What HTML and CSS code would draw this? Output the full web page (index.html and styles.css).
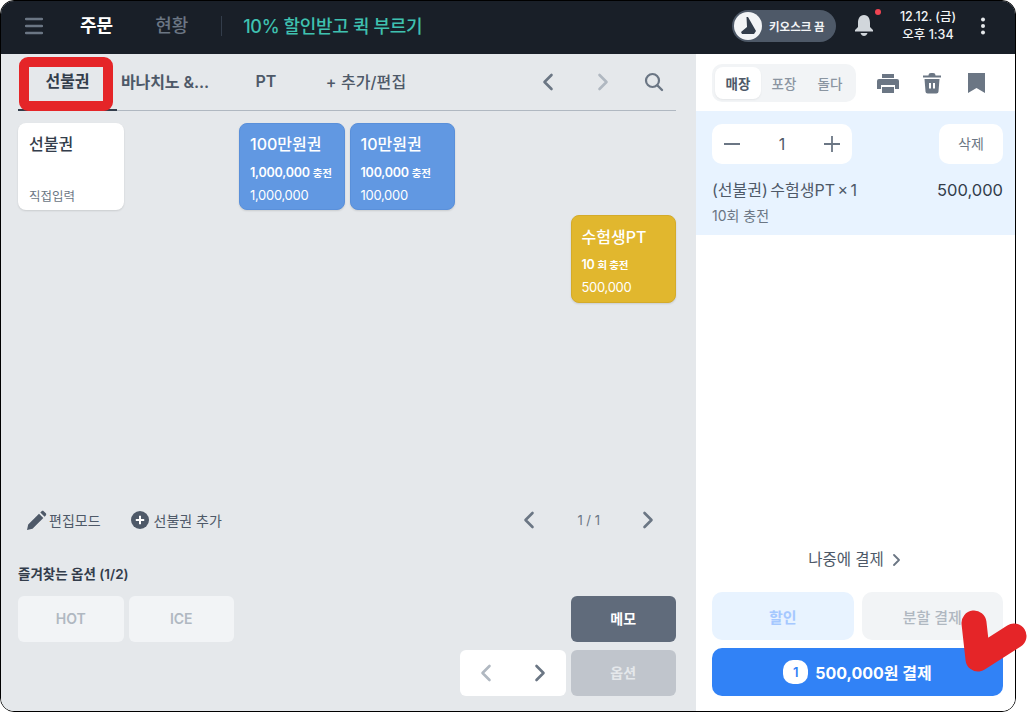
FILE: index.html
```html
<!DOCTYPE html>
<html lang="ko">
<head>
    <meta charset="UTF-8">
    <title>주문</title>
    <link rel="stylesheet" href="styles.css">
</head>
<body>
<div class="page">
<div class="app">
    <header class="topbar">
        <svg class="menu-icon" width="18" height="18" viewBox="0 0 18 18"><path d="M1 2h16M1 9h16M1 16h16" stroke="#6b7684" stroke-width="2.4" stroke-linecap="round"/></svg>
        <span class="nav-link active">주문</span>
        <span class="nav-link">현황</span>
        <span class="divider"></span>
        <span class="promo">10% 할인받고 퀵 부르기</span>
        <div class="topbar-right">
            <div class="kiosk">
                <span class="kiosk-knob">
                    <svg width="20" height="20" viewBox="0 0 20 20"><path d="M8.500 1L10 1L18 15L16 18H4L3 16L9 11Z" fill="#333d4b"/></svg>
                </span>
                <span class="kiosk-label">키오스크 끔</span>
            </div>
            <div class="bell">
                <svg width="20" height="23" viewBox="0 0 20 23"><path d="M10 1C5.500 1 4 5 4 9V13L1 16V17.500H19V16L16 13V9C16 5 14.500 1 10 1Z" fill="#d1d6db"/><path d="M6.500 19H13.500C13 21 11.500 22 10 22S7 21 6.500 19Z" fill="#d1d6db"/></svg>
                <span class="bell-dot"></span>
            </div>
            <div class="clock">12.12. (금)<br>오후 1:34</div>
            <svg class="kebab" width="6" height="18" viewBox="0 0 6 18"><circle cx="3" cy="2.500" r="2" fill="#e5e8eb"/><circle cx="3" cy="9" r="2" fill="#e5e8eb"/><circle cx="3" cy="15.500" r="2" fill="#e5e8eb"/></svg>
        </div>
    </header>

    <div class="body">
        <main class="left">
            <nav class="tabs">
                <span class="tab tab-on">선불권</span>
                <span class="tab">바나치노 &amp;...</span>
                <span class="tab">PT</span>
                <span class="tab tab-add">+ 추가/편집</span>
                <div class="tab-tools">
                    <svg width="14" height="18" viewBox="0 0 14 18"><path d="M10.500 2L3.500 9l7 7" fill="none" stroke="#6b7684" stroke-width="2.600" stroke-linecap="round" stroke-linejoin="round"/></svg>
                    <svg width="14" height="18" viewBox="0 0 14 18"><path d="M3.500 2l7 7-7 7" fill="none" stroke="#b0b8c1" stroke-width="2.600" stroke-linecap="round" stroke-linejoin="round"/></svg>
                    <svg width="20" height="20" viewBox="0 0 20 20"><circle cx="8.500" cy="8.500" r="6.500" fill="none" stroke="#6b7684" stroke-width="2.200"/><path d="M13.500 13.500L18 18" stroke="#6b7684" stroke-width="2.400" stroke-linecap="round"/></svg>
                </div>
            </nav>

            <section class="cards">
                <div class="card card-white">
                    <div class="card-title">선불권</div>
                    <div class="card-bottom">직접입력</div>
                </div>
                <div class="card card-blue col-3">
                    <div class="card-title">100만원권</div>
                    <div class="card-charge">1,000,000 <small>충전</small></div>
                    <div class="card-bottom">1,000,000</div>
                </div>
                <div class="card card-blue col-4">
                    <div class="card-title">10만원권</div>
                    <div class="card-charge">100,000 <small>충전</small></div>
                    <div class="card-bottom">100,000</div>
                </div>
                <div class="card card-yellow col-6 row-2">
                    <div class="card-title">수험생PT</div>
                    <div class="card-charge">10 <small>회 충전</small></div>
                    <div class="card-bottom">500,000</div>
                </div>
            </section>

            <div class="edit-row">
                <span class="edit-btn">
                    <svg width="21" height="21" viewBox="0 0 21 21"><path d="M1 20l1.200-5.500L13 3.700l4.300 4.300L6.500 18.800zM14.300 2.400l1.300-1.200c.6-.6 1.500-.6 2.100 0l2.100 2.100c.6.6.6 1.500 0 2.100l-1.200 1.300z" fill="#4e5968"/></svg>
                    편집모드
                </span>
                <span class="edit-btn add-btn">
                    <svg width="18" height="18" viewBox="0 0 18 18"><circle cx="9" cy="9" r="9" fill="#4e5968"/><path d="M9 4.800v8.400M4.800 9h8.400" stroke="#fff" stroke-width="2"/></svg>
                    선불권 추가
                </span>
                <div class="pager">
                    <svg width="14" height="18" viewBox="0 0 14 18"><path d="M10.500 2L3.500 9l7 7" fill="none" stroke="#6b7684" stroke-width="2.600" stroke-linecap="round" stroke-linejoin="round"/></svg>
                    <span class="pager-num">1 / 1</span>
                    <svg width="14" height="18" viewBox="0 0 14 18"><path d="M3.500 2l7 7-7 7" fill="none" stroke="#6b7684" stroke-width="2.600" stroke-linecap="round" stroke-linejoin="round"/></svg>
                </div>
            </div>

            <div class="fav-title">즐겨찾는 옵션 (1/2)</div>
            <div class="options">
                <span class="opt">HOT</span>
                <span class="opt">ICE</span>
                <span class="opt opt-memo col-6">메모</span>
                <div class="opt-nav col-5 row-2">
                    <svg width="14" height="18" viewBox="0 0 14 18"><path d="M10.500 2L3.500 9l7 7" fill="none" stroke="#b0b8c1" stroke-width="2.600" stroke-linecap="round" stroke-linejoin="round"/></svg>
                    <svg width="14" height="18" viewBox="0 0 14 18"><path d="M3.500 2l7 7-7 7" fill="none" stroke="#6b7684" stroke-width="2.600" stroke-linecap="round" stroke-linejoin="round"/></svg>
                </div>
                <span class="opt opt-off col-6 row-2">옵션</span>
            </div>
        </main>

        <aside class="right">
            <div class="order-tools">
                <div class="segment">
                    <span class="seg seg-on">매장</span>
                    <span class="seg">포장</span>
                    <span class="seg">돌다</span>
                </div>
                <div class="tool-icons">
                    <svg width="22" height="21" viewBox="0 0 22 21"><path d="M5 1h12v4H5zM2 6h18a2 2 0 0 1 2 2v8h-4v-4H4v4H0V8a2 2 0 0 1 2-2zM5 14h12v6H5z" fill="#6b7684"/></svg>
                    <svg width="20" height="22" viewBox="0 0 20 22"><path d="M6.500 3.500C6.500 1.800 7.500 1 9 1h2c1.500 0 2.500.8 2.500 2.500H19v2H1v-2zM2.500 7h15l-1 12.500c-.1 1.300-1 2-2.200 2H5.700c-1.200 0-2.100-.7-2.200-2z" fill="#6b7684"/><path d="M8 11v5.500M12 11v5.500" stroke="#fff" stroke-width="2"/></svg>
                    <svg class="bookmark" width="17" height="20" viewBox="0 0 17 20"><path d="M0 0h17v20l-8.500-5-8.500 5z" fill="#6b7684"/></svg>
                </div>
            </div>

            <div class="order-item">
                <div class="item-controls">
                    <div class="stepper">
                        <svg width="16" height="16" viewBox="0 0 16 16"><path d="M0 8h16" stroke="#6b7684" stroke-width="1.800"/></svg>
                        <span class="qty">1</span>
                        <svg width="16" height="16" viewBox="0 0 16 16"><path d="M0 8h16M8 0v16" stroke="#6b7684" stroke-width="1.800"/></svg>
                    </div>
                    <span class="del-btn">삭제</span>
                </div>
                <div class="item-line">
                    <span>(선불권) 수험생PT × 1</span>
                    <span class="item-price">500,000</span>
                </div>
                <div class="item-sub">10회 충전</div>
            </div>

            <div class="pay-area">
                <div class="later">
                    나중에 결제
                    <svg width="9" height="12" viewBox="0 0 9 12"><path d="M2 1l5 5-5 5" fill="none" stroke="#6b7684" stroke-width="1.800" stroke-linecap="round" stroke-linejoin="round"/></svg>
                </div>
                <div class="pay-row">
                    <span class="btn btn-discount">할인</span>
                    <span class="btn btn-split">분할 결제</span>
                </div>
                <div class="btn btn-pay"><span class="pay-count">1</span>500,000원 결제</div>
            </div>
        </aside>
    </div>
</div>

<!-- annotation marks drawn over the screenshot -->
<div class="mark-box"></div>
<svg class="mark-check" width="78" height="80" viewBox="0 0 78 80"><path d="M24 23L28 59L64 36" fill="none" stroke="#e52528" stroke-width="25" stroke-linecap="round" stroke-linejoin="round"/></svg>
</div>
</body>
</html>
```

FILE: styles.css
```css
* {
    box-sizing: border-box;
}
html, body {
    margin: 0;
    height: 100%;
    background: #fff;
}
body {
    font-family: Inter, "Noto Sans CJK KR", sans-serif;
    color: #333d4b;
}
.page {
    position: relative;
    width: 1028px;
    height: 712px;
    overflow: hidden;
}
.app {
    width: 1016px;
    height: 712px;
    border: 1px solid #000;
    border-radius: 14px;
    overflow: hidden;
    display: flex;
    flex-direction: column;
}
.col-3 { grid-column: 3; }
.col-4 { grid-column: 4; }
.col-5 { grid-column: 5; }
.col-6 { grid-column: 6; }
.row-2 { grid-row: 2; }

/* top bar */
.topbar {
    height: 53px;
    flex: none;
    background: #191f28;
    display: flex;
    align-items: center;
    padding: 0 0 4px 24px;
}
.menu-icon {
    margin-right: 37px;
}
.nav-link {
    font-size: 18px;
    font-weight: 500;
    color: #6b7684;
    margin-right: 42px;
    line-height: 1;
}
.nav-link.active {
    color: #fff;
    font-weight: 700;
}
.divider {
    width: 1px;
    height: 20px;
    background: #333d4b;
    margin-left: -9px;
    margin-right: 21px;
}
.promo {
    font-size: 18px;
    font-weight: 500;
    color: #3fc1b0;
    letter-spacing: -0.35px;
    padding-bottom: 1px;
}
.topbar-right {
    margin-left: auto;
    display: flex;
    align-items: center;
}
.kiosk {
    width: 104px;
    height: 32px;
    border-radius: 16px;
    background: #4e5968;
    display: flex;
    align-items: center;
    padding-left: 2px;
    margin-right: 18px;
}
.kiosk-knob {
    width: 28px;
    height: 28px;
    border-radius: 50%;
    background: #f2f4f6;
    display: flex;
    align-items: center;
    justify-content: center;
}
.kiosk-label {
    font-size: 11.5px;
    font-weight: 700;
    color: #f2f4f6;
    margin-left: 7px;
    white-space: nowrap;
}
.bell {
    position: relative;
    width: 20px;
    height: 23px;
    margin-right: 25px;
}
.bell-dot {
    position: absolute;
    top: -5px;
    right: -7px;
    width: 6px;
    height: 6px;
    border-radius: 50%;
    background: #f04452;
}
.clock {
    font-size: 12.5px;
    font-weight: 500;
    line-height: 18px;
    text-align: center;
    color: #f2f4f6;
    width: 58px;
    margin-right: 23px;
}
.kebab {
    margin-right: 29px;
}

.body {
    flex: 1;
    display: flex;
    min-height: 0;
}

/* left panel */
.left {
    width: 695px;
    background: #e5e8eb;
    padding: 0 20px 15px 17px;
    display: flex;
    flex-direction: column;
}
.tabs {
    height: 57px;
    flex: none;
    display: flex;
    align-items: center;
    border-bottom: 1px solid #b0b8c1;
    position: relative;
}
.tab {
    font-size: 16px;
    font-weight: 600;
    color: #4e5968;
    width: 99px;
    height: 100%;
    display: flex;
    align-items: center;
    justify-content: center;
    white-space: nowrap;
    padding-bottom: 3px;
}
.tab-on {
    color: #333d4b;
    border-bottom: 2px solid #333d4b;
    margin-bottom: -1px;
}
.tab:nth-child(2) {
    width: 92px;
    justify-content: flex-start;
    padding-left: 4px;
    letter-spacing: -0.1px;
}
.tab:nth-child(3) {
    width: 114px;
}
.tab-add {
    width: 82px;
    margin-left: 2px;
    font-weight: 500;
    letter-spacing: 0.1px;
}
.tab-tools {
    margin-left: auto;
    display: flex;
    align-items: center;
    gap: 41px;
    padding-right: 12px;
}
.tab-tools svg:last-child {
    margin-left: -7px;
}
.cards {
    display: grid;
    grid-template-columns: repeat(6, 1fr);
    grid-template-rows: 87px 88px;
    gap: 5px;
    margin-top: 12px;
}
.card {
    border-radius: 8px;
    padding: 10px 11px 4px;
    display: flex;
    flex-direction: column;
    color: #fff;
    box-shadow: 0 1px 2px rgba(0, 0, 0, 0.12);
}
.card-white {
    background: #fff;
    color: #333d4b;
}
.card-blue {
    background: #6198e2;
    border: 1px solid #5a90da;
    padding: 9px 10px 5px;
}
.card-yellow {
    background: #e1b72e;
    border: 1px solid #d4ab2a;
    padding: 10px 10px 6px;
}
.card-title {
    font-size: 16px;
    font-weight: 500;
    line-height: 22px;
    white-space: nowrap;
}
.card-charge {
    font-size: 12.5px;
    font-weight: 600;
    line-height: 16px;
    margin-top: 10px;
    letter-spacing: -0.2px;
    white-space: nowrap;
}
.card-yellow .card-charge {
    margin-top: 9px;
}
.card-charge small {
    font-size: 10.5px;
    font-weight: 700;
}
.card-bottom {
    font-size: 13px;
    line-height: 18px;
    margin-top: auto;
    letter-spacing: -0.3px;
}
.card-white .card-bottom {
    color: #6b7684;
    font-size: 12.5px;
    letter-spacing: 0;
}
.edit-row {
    display: flex;
    align-items: center;
    margin-top: auto;
    padding-left: 8px;
    height: 24px;
}
.edit-btn {
    display: flex;
    align-items: center;
    gap: 2px;
    font-size: 14px;
    color: #4e5968;
    white-space: nowrap;
}
.add-btn {
    margin-left: 30px;
    gap: 5px;
}
.pager {
    margin-left: auto;
    display: flex;
    align-items: center;
    gap: 41px;
    padding-right: 21px;
}
.pager-num {
    font-size: 13px;
    color: #6b7684;
}
.fav-title {
    font-size: 13.5px;
    font-weight: 600;
    color: #333d4b;
    line-height: 18px;
    margin-top: 33px;
}
.options {
    display: grid;
    grid-template-columns: repeat(6, 1fr);
    grid-auto-rows: 46px;
    column-gap: 5px;
    row-gap: 8px;
    margin-top: 13px;
}
.opt {
    border-radius: 6px;
    background: #f2f4f6;
    color: #b0b8c1;
    font-size: 14px;
    font-weight: 600;
    display: flex;
    align-items: center;
    justify-content: center;
    padding-bottom: 2px;
}
.opt-memo {
    background: #606b7b;
    color: #fff;
}
.opt-off {
    background: #c0c5cc;
    color: #e5e8eb;
}
.opt-nav {
    background: #fff;
    border-radius: 6px;
    display: flex;
    align-items: center;
    justify-content: space-between;
    padding: 0 19px;
}

/* right panel */
.right {
    flex: 1;
    background: #fff;
    display: flex;
    flex-direction: column;
}
.order-tools {
    height: 57px;
    flex: none;
    display: flex;
    align-items: center;
    padding: 1px 0 0 16px;
}
.segment {
    width: 144px;
    height: 38px;
    background: #f2f4f6;
    border-radius: 10px;
    padding: 3px;
    display: flex;
}
.seg {
    flex: 1;
    font-size: 13.5px;
    font-weight: 500;
    color: #8b95a1;
    display: flex;
    align-items: center;
    justify-content: center;
}
.seg-on {
    background: #fff;
    border-radius: 8px;
    color: #4e5968;
    font-weight: 600;
    box-shadow: 0 1px 2px rgba(0, 0, 0, 0.06);
}
.tool-icons {
    display: flex;
    align-items: center;
    gap: 23px;
    margin-left: 21px;
}
.bookmark {
    margin-left: 2.5px;
}
.order-item {
    height: 124px;
    flex: none;
    background: #e8f3ff;
    padding: 13px 12px 0 16px;
}
.item-controls {
    display: flex;
    justify-content: space-between;
}
.stepper {
    width: 140px;
    height: 40px;
    background: #fff;
    border-radius: 10px;
    display: flex;
    align-items: center;
    justify-content: space-between;
    padding: 0 12px;
}
.qty {
    font-size: 16px;
    color: #4e5968;
    padding-bottom: 1px;
}
.del-btn {
    width: 64px;
    height: 40px;
    background: #fff;
    border-radius: 10px;
    font-size: 14px;
    color: #6b7684;
    display: flex;
    align-items: center;
    justify-content: center;
    padding-bottom: 2px;
}
.item-line {
    display: flex;
    justify-content: space-between;
    align-items: center;
    font-size: 16px;
    word-spacing: -2px;
    color: #4e5968;
    line-height: 24px;
    margin-top: 14px;
}
.item-price {
    font-size: 16.5px;
    color: #333d4b;
}
.item-sub {
    font-size: 14px;
    color: #6b7684;
    line-height: 18px;
    margin-top: 5px;
}
.pay-area {
    margin-top: auto;
    padding: 0 12px 15px 16px;
}
.later {
    display: flex;
    align-items: center;
    justify-content: center;
    gap: 8px;
    font-size: 15.5px;
    color: #4e5968;
    line-height: 20px;
    margin-bottom: 22px;
    padding-right: 6px;
}
.pay-row {
    display: flex;
    gap: 8px;
    margin-bottom: 8px;
}
.btn {
    height: 48px;
    border-radius: 10px;
    display: flex;
    align-items: center;
    justify-content: center;
    font-size: 15px;
    font-weight: 500;
}
.btn-discount {
    flex: 1;
    background: #e8f3ff;
    color: #a5c8ff;
    font-weight: 600;
}
.btn-split {
    flex: 1;
    background: #f2f4f6;
    color: #b0b8c1;
}
.btn-pay {
    background: #3182f6;
    color: #fff;
    font-size: 16px;
    font-weight: 700;
}
.pay-count {
    width: 25px;
    height: 24px;
    border-radius: 10px;
    background: #fff;
    color: #3182f6;
    font-size: 13px;
    font-weight: 600;
    display: flex;
    align-items: center;
    justify-content: center;
    margin-right: 7px;
}

/* annotations */
.mark-box {
    position: absolute;
    left: 19px;
    top: 57px;
    width: 94px;
    height: 54px;
    border: 10px solid #e52528;
    border-radius: 9px;
}
.mark-check {
    position: absolute;
    left: 950px;
    top: 600px;
}
```
